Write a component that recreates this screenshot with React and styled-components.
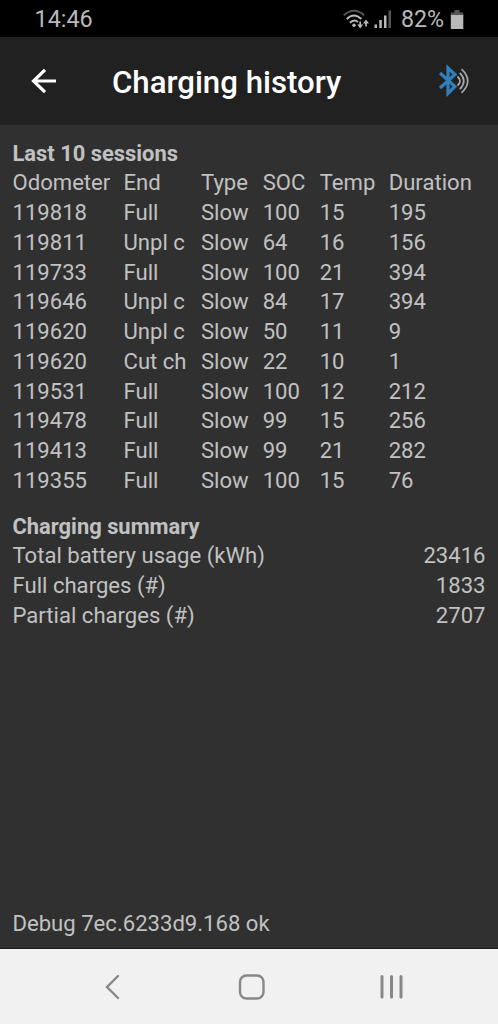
import React from 'react';
import styled, { createGlobalStyle } from 'styled-components';

const Global = createGlobalStyle`
  * { box-sizing: border-box; }
  body { margin: 0; background: #303030; }
`;

const Screen = styled.div`
  width: 498px;
  height: 1024px;
  display: flex;
  flex-direction: column;
  overflow: hidden;
  background: #303030;
  color: #c1c1c1;
  font: 400 22.1px/29.75px Roboto, sans-serif;
`;

const StatusBar = styled.header`
  flex: none;
  height: 37px;
  padding: 3px 34px 0 34.5px;
  display: flex;
  justify-content: space-between;
  align-items: center;
  background: #000;
  color: #b9b9b9;
`;

const Clock = styled.span`
  font-size: 23.4px;
`;

const Indicators = styled.div`
  display: flex;
  align-items: center;
`;

const BatteryLevel = styled.span`
  margin: 0 6px 0 9px;
  font-size: 23.2px;
`;

const Toolbar = styled.div`
  flex: none;
  height: 88px;
  padding: 0 26px 0 30px;
  display: flex;
  align-items: center;
  background: #212121;
  color: #fff;
`;

const Title = styled.h1`
  flex: 1;
  margin: 3px 0 0 54px;
  font-size: 31.2px;
  font-weight: 500;
  line-height: 40px;
  white-space: nowrap;
`;

const Icon = styled.svg`
  display: block;
  flex: none;
`;

const Content = styled.main`
  flex: 1;
  padding: 13.5px 12.5px 9.5px;
  display: flex;
  flex-direction: column;
`;

const Section = styled.section`
  margin-bottom: 16px;
`;

const Heading = styled.h2`
  margin: 0;
  font: inherit;
  font-size: 21.9px;
  font-weight: 700;
`;

const SessionRow = styled.div`
  display: grid;
  grid-template-columns: 111px 77.5px 61.7px 57px 69px 1fr;
  white-space: nowrap;
`;

const SummaryRow = styled.div`
  display: flex;
  justify-content: space-between;
`;

const DebugLine = styled.div`
  margin-top: auto;
`;

const NavBar = styled.nav`
  flex: none;
  height: 76px;
  padding: 0 94px 0 105px;
  display: flex;
  align-items: center;
  justify-content: space-between;
  border-top: 1px solid #1a1a1a;
  background: #f1f1f1;
  color: #888;
`;

const columns = ['Odometer', 'End', 'Type', 'SOC', 'Temp', 'Duration'];
const sessions = [
  [119818, 'Full', 'Slow', 100, 15, 195],
  [119811, 'Unpl c', 'Slow', 64, 16, 156],
  [119733, 'Full', 'Slow', 100, 21, 394],
  [119646, 'Unpl c', 'Slow', 84, 17, 394],
  [119620, 'Unpl c', 'Slow', 50, 11, 9],
  [119620, 'Cut ch', 'Slow', 22, 10, 1],
  [119531, 'Full', 'Slow', 100, 12, 212],
  [119478, 'Full', 'Slow', 99, 15, 256],
  [119413, 'Full', 'Slow', 99, 21, 282],
  [119355, 'Full', 'Slow', 100, 15, 76],
];
const summary = [
  ['Total battery usage (kWh)', 23416],
  ['Full charges (#)', 1833],
  ['Partial charges (#)', 2707],
];

const WifiIcon = () => (
  <Icon width="31" height="22" viewBox="0 0 31 22" fill="none" stroke="#b9b9b9" strokeWidth="2">
    <path d="M.8 6.2Q11 -2.8 21.2 6.2" stroke="#555" />
    <path d="M3.7 10Q11 3 18.3 10M7 13.8Q11 9.6 15 13" />
    <circle cx="11" cy="16.3" r="1.7" fill="#b9b9b9" stroke="none" />
    <path d="M17.2 12.5V17M23 17.5V13.5" strokeWidth="1.7" />
    <path d="M14.2 15.5h6l-3 4zM20 14.5h6l-3-4z" fill="#b9b9b9" stroke="none" />
  </Icon>
);

const SignalIcon = () => (
  <Icon width="18" height="20" viewBox="0 0 18 20" fill="#b9b9b9">
    <path d="M.5 14.5H3V18H.5zM5.3 10H7.8v8H5.3zM10 5.5h2.5V18H10z" />
    <path d="M14.5 .5H17V18h-2.5z" fill="#555" />
  </Icon>
);

const BatteryIcon = () => (
  <Icon width="14" height="20" viewBox="0 0 14 20">
    <path d="M4.5 0h5v2.5H13.3V6H.8V2.5h3.7z" fill="#555" />
    <path d="M.8 5h12.5v14H.8z" fill="#b9b9b9" />
  </Icon>
);

const BackArrow = () => (
  <Icon width="28" height="28" viewBox="0 0 28 28" fill="none" stroke="#fff" strokeWidth="3.2">
    <path d="M26 14H4M15 2.8L3.5 14L15 25.2" />
  </Icon>
);

const BluetoothIcon = () => (
  <Icon width="34" height="34" viewBox="0 0 34 34" fill="none">
    <path d="M2 9L17 22.5L10 29.5V4L17 10.5L2 24" stroke="#2f80bd" strokeWidth="3.2" />
    <path d="M19.5 12.5Q24.5 17 19.5 21.5M21.8 8.8Q29.8 17 21.8 25.2M23.5 5.2Q36 17 23.5 28.8" stroke="#a9a9a9" strokeWidth="1.7" />
  </Icon>
);

export default function App() {
  return (
    <Screen>
      <Global />
      <StatusBar>
        <Clock>14:46</Clock>
        <Indicators>
          <WifiIcon />
          <SignalIcon />
          <BatteryLevel>82%</BatteryLevel>
          <BatteryIcon />
        </Indicators>
      </StatusBar>
      <Toolbar>
        <BackArrow />
        <Title>Charging history</Title>
        <BluetoothIcon />
      </Toolbar>
      <Content>
        <Section>
          <Heading>Last 10 sessions</Heading>
          <SessionRow>
            {columns.map((name) => <span key={name}>{name}</span>)}
          </SessionRow>
          {sessions.map((session) => (
            <SessionRow key={session.join()}>
              {session.map((value, i) => <span key={columns[i]}>{value}</span>)}
            </SessionRow>
          ))}
        </Section>
        <Section>
          <Heading>Charging summary</Heading>
          {summary.map(([label, value]) => (
            <SummaryRow key={label}>
              <span>{label}</span>
              <span>{value}</span>
            </SummaryRow>
          ))}
        </Section>
        <DebugLine>Debug 7ec.6233d9.168 ok</DebugLine>
      </Content>
      <NavBar>
        <Icon width="15" height="26" viewBox="0 0 15 26" fill="none" stroke="currentColor" strokeWidth="2.4" strokeLinecap="round">
          <path d="M13 2L2 13L13 24" />
        </Icon>
        <Icon width="30" height="26" viewBox="0 0 30 26" fill="none" stroke="currentColor" strokeWidth="2.4">
          <rect x="5" y="1.5" width="23.5" height="23" rx="6.5" />
        </Icon>
        <Icon width="24" height="26" viewBox="0 0 24 26" fill="none" stroke="currentColor" strokeWidth="3" strokeLinecap="round">
          <path d="M2 2.5V23M11.5 2.5V23M21 2.5V23" />
        </Icon>
      </NavBar>
    </Screen>
  );
}
